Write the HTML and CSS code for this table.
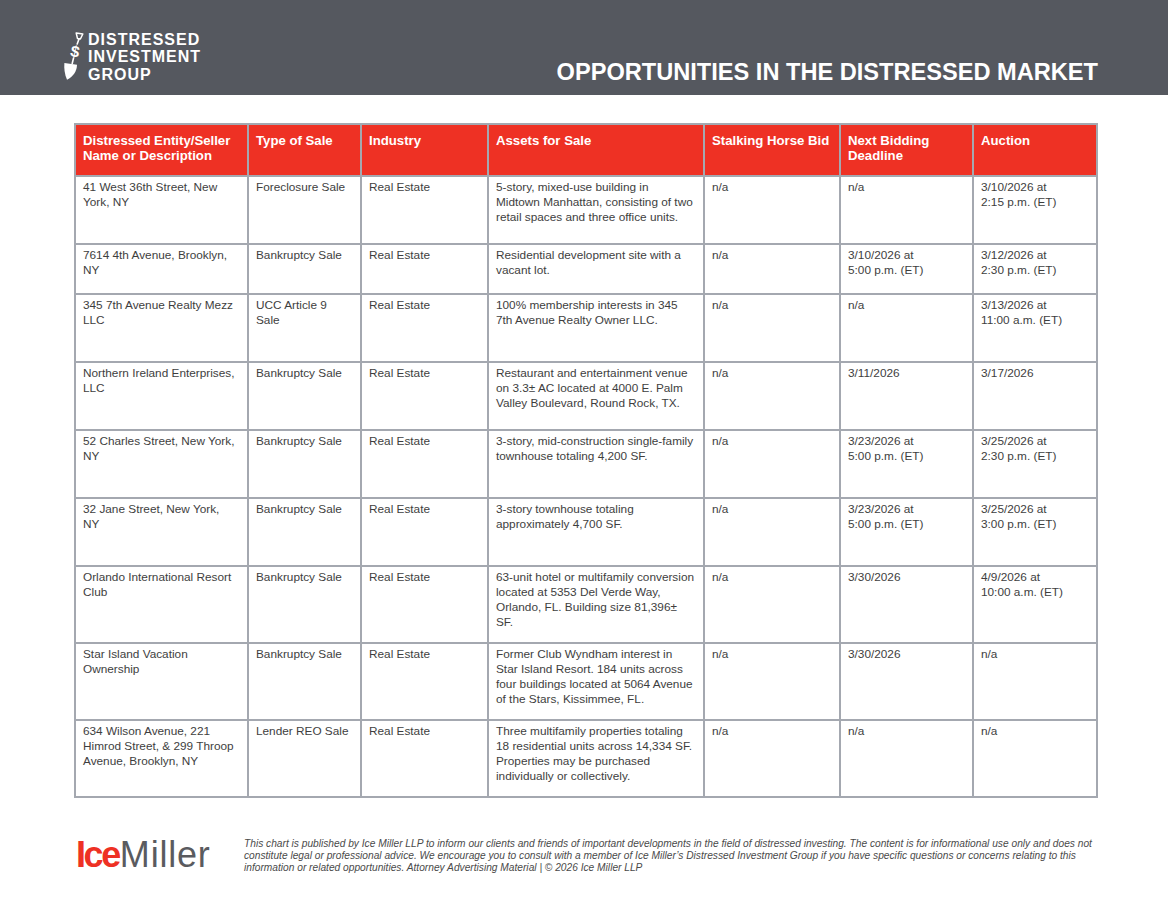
FILE: index.html
```html
<!DOCTYPE html>
<html lang="en">
<head>
<meta charset="utf-8">
<title>Opportunities in the Distressed Market</title>
<link rel="stylesheet" href="styles.css">
</head>
<body>
<header class="topbar">
  <div class="brand">
    <svg class="brand-icon" viewBox="0 0 30 52" aria-hidden="true">
      <path d="M16.2 3 L22.8 4 L20.4 9 L17.5 8.6 Z" fill="none" stroke="#fff" stroke-width="1.5" stroke-linejoin="round"/>
      <path d="M19 9 L17.2 14" stroke="#fff" stroke-width="1.6" stroke-linecap="round"/>
      <text x="15.2" y="27" class="dollar" transform="rotate(12 15.2 21)">$</text>
      <path d="M13.5 28.2 L12.2 33.5" stroke="#fff" stroke-width="1.6" stroke-linecap="round"/>
      <path d="M4.4 33 L17 34.8 C17 41 13.2 46.8 7 49.8 C4.5 44 3.9 38 4.4 33 Z" fill="#fff"/>
    </svg>
    <div class="brand-name">
      <div>DISTRESSED</div>
      <div>INVESTMENT</div>
      <div>GROUP</div>
    </div>
  </div>
  <h1 class="title">OPPORTUNITIES IN THE DISTRESSED MARKET</h1>
</header>

<main class="page">
  <table class="deals">
    <colgroup>
      <col class="c1"><col class="c2"><col class="c3"><col class="c4"><col class="c5"><col class="c6"><col class="c7">
    </colgroup>
    <thead>
      <tr class="h-head">
        <th>Distressed Entity/Seller<br>Name or Description</th>
        <th>Type of Sale</th>
        <th>Industry</th>
        <th>Assets for Sale</th>
        <th>Stalking Horse Bid</th>
        <th>Next Bidding<br>Deadline</th>
        <th>Auction</th>
      </tr>
    </thead>
    <tbody>
      <tr class="h68">
        <td>41 West 36th Street, New<br>York, NY</td>
        <td>Foreclosure Sale</td>
        <td>Real Estate</td>
        <td>5-story, mixed-use building in<br>Midtown Manhattan, consisting of two<br>retail spaces and three office units.</td>
        <td>n/a</td>
        <td>n/a</td>
        <td>3/10/2026 at<br>2:15 p.m. (ET)</td>
      </tr>
      <tr class="h50">
        <td>7614 4th Avenue, Brooklyn,<br>NY</td>
        <td>Bankruptcy Sale</td>
        <td>Real Estate</td>
        <td>Residential development site with a<br>vacant lot.</td>
        <td>n/a</td>
        <td>3/10/2026 at<br>5:00 p.m. (ET)</td>
        <td>3/12/2026 at<br>2:30 p.m. (ET)</td>
      </tr>
      <tr class="h68">
        <td>345 7th Avenue Realty Mezz<br>LLC</td>
        <td>UCC Article 9<br>Sale</td>
        <td>Real Estate</td>
        <td>100% membership interests in 345<br>7th Avenue Realty Owner LLC.</td>
        <td>n/a</td>
        <td>n/a</td>
        <td>3/13/2026 at<br>11:00 a.m. (ET)</td>
      </tr>
      <tr class="h68">
        <td>Northern Ireland Enterprises,<br>LLC</td>
        <td>Bankruptcy Sale</td>
        <td>Real Estate</td>
        <td>Restaurant and entertainment venue<br>on 3.3± AC located at 4000 E. Palm<br>Valley Boulevard, Round Rock, TX.</td>
        <td>n/a</td>
        <td>3/11/2026</td>
        <td>3/17/2026</td>
      </tr>
      <tr class="h68">
        <td>52 Charles Street, New York,<br>NY</td>
        <td>Bankruptcy Sale</td>
        <td>Real Estate</td>
        <td>3-story, mid-construction single-family<br>townhouse totaling 4,200 SF.</td>
        <td>n/a</td>
        <td>3/23/2026 at<br>5:00 p.m. (ET)</td>
        <td>3/25/2026 at<br>2:30 p.m. (ET)</td>
      </tr>
      <tr class="h68">
        <td>32 Jane Street, New York,<br>NY</td>
        <td>Bankruptcy Sale</td>
        <td>Real Estate</td>
        <td>3-story townhouse totaling<br>approximately 4,700 SF.</td>
        <td>n/a</td>
        <td>3/23/2026 at<br>5:00 p.m. (ET)</td>
        <td>3/25/2026 at<br>3:00 p.m. (ET)</td>
      </tr>
      <tr class="h77">
        <td>Orlando International Resort<br>Club</td>
        <td>Bankruptcy Sale</td>
        <td>Real Estate</td>
        <td>63-unit hotel or multifamily conversion<br>located at 5353 Del Verde Way,<br>Orlando, FL. Building size 81,396±<br>SF.</td>
        <td>n/a</td>
        <td>3/30/2026</td>
        <td>4/9/2026 at<br>10:00 a.m. (ET)</td>
      </tr>
      <tr class="h77">
        <td>Star Island Vacation<br>Ownership</td>
        <td>Bankruptcy Sale</td>
        <td>Real Estate</td>
        <td>Former Club Wyndham interest in<br>Star Island Resort. 184 units across<br>four buildings located at 5064 Avenue<br>of the Stars, Kissimmee, FL.</td>
        <td>n/a</td>
        <td>3/30/2026</td>
        <td>n/a</td>
      </tr>
      <tr class="h77">
        <td>634 Wilson Avenue, 221<br>Himrod Street, &amp; 299 Throop<br>Avenue, Brooklyn, NY</td>
        <td>Lender REO Sale</td>
        <td>Real Estate</td>
        <td>Three multifamily properties totaling<br>18 residential units across 14,334 SF.<br>Properties may be purchased<br>individually or collectively.</td>
        <td>n/a</td>
        <td>n/a</td>
        <td>n/a</td>
      </tr>
    </tbody>
  </table>

  <footer class="footer">
    <div class="logo"><span class="logo-ice">Ice</span><span class="logo-miller">Miller</span></div>
    <p class="disclaimer">This chart is published by Ice Miller LLP to inform our clients and friends of important developments in the field of distressed investing. The content is for informational use only and does not<br>constitute legal or professional advice. We encourage you to consult with a member of Ice Miller’s Distressed Investment Group if you have specific questions or concerns relating to this<br>information or related opportunities. Attorney Advertising Material | © 2026 Ice Miller LLP</p>
  </footer>
</main>
</body>
</html>
```

FILE: styles.css
```css
html, body {
  margin: 0;
  padding: 0;
  background: #ffffff;
}

body {
  font-family: "Liberation Sans", Arial, sans-serif;
  color: #3e3e3e;
}

/* ---------- top bar ---------- */
.topbar {
  box-sizing: border-box;
  height: 95px;
  background: #55585f;
  display: flex;
  justify-content: space-between;
  align-items: flex-start;
  padding: 0 70px 0 60px;
}

.brand {
  display: flex;
  align-items: flex-start;
  margin-top: 30px;
}

.brand-icon {
  display: block;
  width: 30px;
  height: 52px;
}

.dollar {
  fill: #ffffff;
  font-family: "Liberation Sans", Arial, sans-serif;
  font-weight: 700;
  font-size: 16px;
  text-anchor: middle;
}

.brand-name {
  margin-left: -2px;
  margin-top: 0.5px;
  color: #ffffff;
  font-weight: 700;
  font-size: 16px;
  line-height: 17.5px;
  letter-spacing: 1px;
}

.title {
  margin: 61px 0 0;
  color: #ffffff;
  font-size: 23.6px;
  line-height: 1;
  font-weight: 700;
  white-space: nowrap;
}

/* ---------- table ---------- */
.page {
  padding: 28px 0 0 74px;
}

.deals {
  table-layout: fixed;
  border-collapse: collapse;
  width: 1024px;
}

.c1 { width: 173px; }
.c2 { width: 113px; }
.c3 { width: 127px; }
.c4 { width: 216px; }
.c5 { width: 136px; }
.c6 { width: 133px; }
.c7 { width: 124px; }

.deals th,
.deals td {
  border: 2px solid #a4a8b0;
  vertical-align: top;
  text-align: left;
  white-space: nowrap;
  overflow: hidden;
}

.deals th {
  background: #ee3124;
  color: #ffffff;
  font-weight: 700;
  font-size: 13.2px;
  line-height: 15px;
  padding: 8px 3px 0 7px;
}

.deals td {
  font-size: 11.8px;
  line-height: 15px;
  padding: 3px 3px 0 7px;
  color: #3e3e3e;
}

.h-head { height: 52px; }
.h50 { height: 50px; }
.h68 { height: 68px; }
.h77 { height: 77px; }

/* ---------- footer ---------- */
.footer {
  display: flex;
  align-items: flex-start;
  margin-top: 39px;
}

.logo {
  width: 170px;
  padding-left: 2px;
  box-sizing: border-box;
  font-size: 36px;
  line-height: 36px;
  white-space: nowrap;
}

.logo-ice {
  color: #ee3124;
  font-weight: 700;
  letter-spacing: -2.4px;
}

.logo-miller {
  color: #5a5b5f;
  font-weight: 400;
  letter-spacing: 0.8px;
  margin-left: 1px;
}

.disclaimer {
  margin: 1px 0 0;
  font-size: 10.2px;
  line-height: 12.2px;
  font-style: italic;
  color: #4a4a4a;
  white-space: nowrap;
}
```
